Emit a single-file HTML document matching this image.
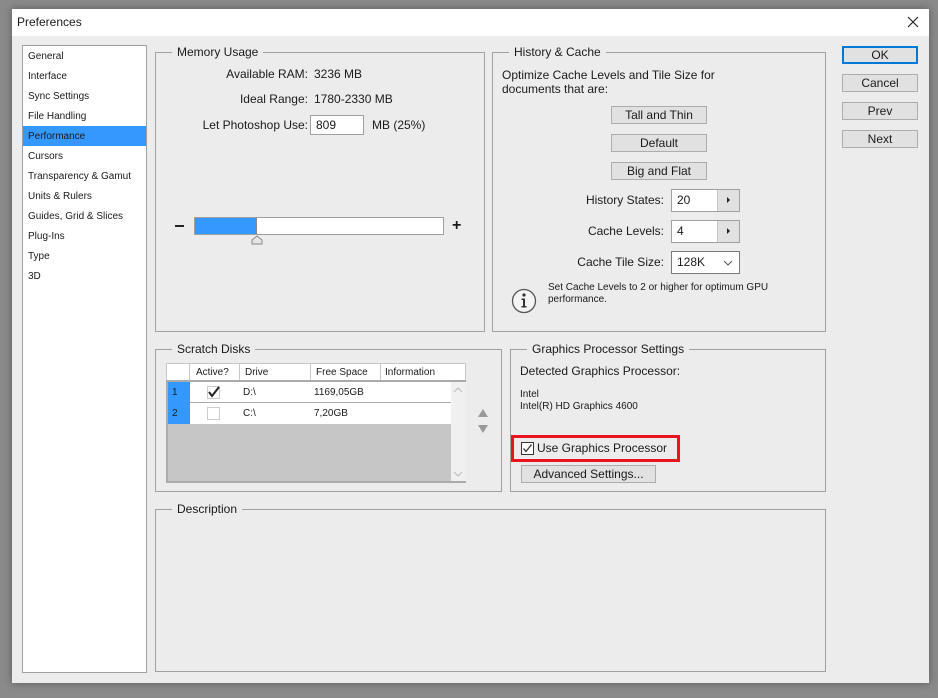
<!DOCTYPE html>
<html><head><meta charset="utf-8"><style>
*{box-sizing:border-box;margin:0;padding:0}
body{width:938px;height:698px;background:#8a8a8a;font-family:"Liberation Sans",Tahoma,sans-serif;font-size:12px;color:#1a1a1a;position:relative;overflow:hidden}
.a{position:absolute}
.win{left:12px;top:9px;width:917px;height:674px;background:#ececec;box-shadow:0 0 8px rgba(0,0,0,.35)}
.title{left:12px;top:9px;width:917px;height:27px;background:#fff}
.fs{position:absolute;border:1px solid #a0a0a0}
.lg{position:absolute;top:-8px;left:16px;background:#ececec;padding:0 5px;font-size:12px;line-height:14px}
.btn{position:absolute;background:#e1e1e1;border:1px solid #adadad;text-align:center;font-size:12px;line-height:17px}
.r{text-align:right}
.list div{height:20px;line-height:21px;padding-left:5px;font-size:10px}
.inp{position:absolute;background:#fff;border:1px solid #a0a0a0;font-size:12px;padding-left:5px}
.spin{position:absolute;background:#e1e1e1;border-left:1px solid #c8c8c8;right:0;top:0;bottom:0;width:22px}
.spin:after{content:"";position:absolute;left:9px;top:7px;border-left:3px solid #222;border-top:3px solid transparent;border-bottom:3px solid transparent}
.t{font-size:10px}
</style></head><body>
<div class="a win"></div>
<div class="a title"></div>
<div class="a" style="left:17px;top:15px;font-size:12px">Preferences</div>
<svg class="a" style="left:906px;top:15px" width="14" height="14"><path d="M2 2L12 12M12 2L2 12" stroke="#222" stroke-width="1.2"/></svg>

<div class="a list" style="left:22px;top:45px;width:125px;height:628px;background:#fff;border:1px solid #a0a0a0;padding-top:0">
<div>General</div><div>Interface</div><div>Sync Settings</div><div>File Handling</div>
<div style="background:#3399ff">Performance</div><div>Cursors</div><div>Transparency &amp; Gamut</div>
<div>Units &amp; Rulers</div><div>Guides, Grid &amp; Slices</div><div>Plug-Ins</div><div>Type</div><div>3D</div>
</div>

<!-- Memory -->
<div class="fs" style="left:155px;top:52px;width:330px;height:280px">
<span class="lg">Memory Usage</span>
<div class="a r" style="left:0;width:152px;top:14px">Available RAM:</div><div class="a" style="left:158px;top:14px">3236 MB</div>
<div class="a r" style="left:0;width:152px;top:39px">Ideal Range:</div><div class="a" style="left:158px;top:39px">1780-2330 MB</div>
<div class="a r" style="left:0;width:152px;top:65px">Let Photoshop Use:</div>
<div class="inp" style="left:154px;top:62px;width:54px;height:20px;line-height:18px">809</div>
<div class="a" style="left:216px;top:65px">MB (25%)</div>
<div class="a" style="left:19px;top:172px;width:9px;height:2px;background:#222"></div>
<div class="a" style="left:38px;top:164px;width:250px;height:18px;background:#fff;border:1px solid #a0a0a0"><div style="width:62px;height:16px;background:#3399ff;border-right:1px solid #888"></div></div>
<svg class="a" style="left:95px;top:182px" width="12" height="10"><path d="M1 9V5L6 1L11 5V9Z" fill="#e6e6e6" stroke="#888"/></svg>
<div class="a" style="left:296px;top:166px;font-size:16px;font-weight:bold;line-height:14px">+</div>
</div>

<!-- History -->
<div class="fs" style="left:492px;top:52px;width:334px;height:280px">
<span class="lg">History &amp; Cache</span>
<div class="a" style="left:9px;top:15px;line-height:14px">Optimize Cache Levels and Tile Size for<br>documents that are:</div>
<div class="btn" style="left:118px;top:53px;width:96px;height:18px">Tall and Thin</div>
<div class="btn" style="left:118px;top:81px;width:96px;height:18px">Default</div>
<div class="btn" style="left:118px;top:109px;width:96px;height:18px">Big and Flat</div>
<div class="a r" style="left:0;width:171px;top:140px">History States:</div>
<div class="inp" style="left:178px;top:136px;width:69px;height:23px;line-height:21px">20<div class="spin"></div></div>
<div class="a r" style="left:0;width:171px;top:171px">Cache Levels:</div>
<div class="inp" style="left:178px;top:167px;width:69px;height:23px;line-height:21px">4<div class="spin"></div></div>
<div class="a r" style="left:0;width:171px;top:202px">Cache Tile Size:</div>
<div class="inp" style="left:178px;top:198px;width:69px;height:23px;line-height:21px;border-color:#7a7a7a">128K<svg class="a" style="left:51px;top:8px" width="10" height="6"><path d="M1 1L5 5L9 1" fill="none" stroke="#555"/></svg></div>
<svg class="a" style="left:18px;top:235px" width="26" height="26"><circle cx="13" cy="13" r="11.5" fill="#f4f4f4" stroke="#555" stroke-width="1.3"/><circle cx="13" cy="7" r="1.6" fill="#333"/><path d="M10.5 10.5H14V18H15.5V19.5H10.5V18H12V12H10.5Z" fill="#333"/></svg>
<div class="a t" style="left:55px;top:229px;line-height:12px">Set Cache Levels to 2 or higher for optimum GPU<br>performance.</div>
</div>

<!-- Scratch -->
<div class="fs" style="left:155px;top:349px;width:347px;height:143px">
<span class="lg">Scratch Disks</span>
<div class="a" style="left:10px;top:13px;width:300px;height:19px;background:#fff;border:1px solid #c8c8c8;border-bottom:none">
<div class="a t" style="left:22px;top:0;width:51px;height:18px;border-left:1px solid #c8c8c8;border-right:1px solid #c8c8c8;line-height:18px;padding-left:6px">Active?</div>
<div class="a t" style="left:74px;top:0;height:18px;line-height:18px;padding-left:4px">Drive</div>
<div class="a t" style="left:143px;top:0;width:71px;height:18px;border-left:1px solid #c8c8c8;border-right:1px solid #c8c8c8;line-height:18px;padding-left:5px">Free Space</div>
<div class="a t" style="left:218px;top:0;line-height:18px">Information</div>
</div>
<div class="a" style="left:10px;top:30px;width:300px;height:103px;background:#c6c6c6;border:2px solid #aaa;border-top:2px solid #aaa">
<div class="a" style="left:0;top:0;width:283px;height:21px;background:#fff;border-bottom:1px solid #aaa"></div>
<div class="a" style="left:0;top:21px;width:283px;height:21px;background:#fff"></div>
<div class="a" style="left:0;top:0;width:22px;height:42px;background:#3399ff"></div>
<div class="a t" style="left:4px;top:5px">1</div><div class="a t" style="left:4px;top:26px">2</div>
<div class="a" style="left:39px;top:4px;width:13px;height:13px;border:1px solid #ccc;background:#fff"></div>
<svg class="a" style="left:40px;top:4px" width="12" height="12"><path d="M1 6L4 10L11 1" fill="none" stroke="#222" stroke-width="2"/></svg>
<div class="a" style="left:39px;top:25px;width:13px;height:13px;border:1px solid #ccc;background:#fff"></div>
<div class="a t" style="left:75px;top:5px">D:\</div><div class="a t" style="left:75px;top:26px">C:\</div>
<div class="a t" style="left:146px;top:5px">1169,05GB</div><div class="a t" style="left:146px;top:26px">7,20GB</div>
<div class="a" style="left:283px;top:0;width:15px;height:99px;background:#f0f0f0"></div>
<svg class="a" style="left:285px;top:5px" width="10" height="6"><path d="M1 5L5 1L9 5" fill="none" stroke="#bbb"/></svg>
<svg class="a" style="left:285px;top:89px" width="10" height="6"><path d="M1 1L5 5L9 1" fill="none" stroke="#bbb"/></svg>
</div>
<svg class="a" style="left:321px;top:58px" width="12" height="30"><path d="M1 9L6 1L11 9Z M1 17L6 25L11 17Z" fill="#999"/></svg>
</div>

<!-- GPU -->
<div class="fs" style="left:510px;top:349px;width:316px;height:143px">
<span class="lg">Graphics Processor Settings</span>
<div class="a" style="left:9px;top:14px">Detected Graphics Processor:</div>
<div class="a t" style="left:9px;top:39px;line-height:12px">Intel<br>Intel(R) HD Graphics 4600</div>
<div class="a" style="left:0;top:85px;width:169px;height:27px;border:3px solid #e8141e"></div>
<div class="a" style="left:10px;top:92px;width:13px;height:13px;border:1px solid #333;background:#fff"></div>
<svg class="a" style="left:11px;top:93px" width="11" height="11"><path d="M1.5 5.5L4 8.5L9.5 1.5" fill="none" stroke="#333" stroke-width="1.3"/></svg>
<div class="a" style="left:26px;top:91px">Use Graphics Processor</div>
<div class="btn" style="left:10px;top:115px;width:135px;height:18px">Advanced Settings...</div>
</div>

<!-- Description -->
<div class="fs" style="left:155px;top:509px;width:671px;height:163px"><span class="lg">Description</span></div>

<div class="btn" style="left:842px;top:46px;width:76px;height:18px;border:2px solid #0078d7;line-height:15px">OK</div>
<div class="btn" style="left:842px;top:74px;width:76px;height:18px">Cancel</div>
<div class="btn" style="left:842px;top:102px;width:76px;height:18px">Prev</div>
<div class="btn" style="left:842px;top:130px;width:76px;height:18px">Next</div>
</body></html>
